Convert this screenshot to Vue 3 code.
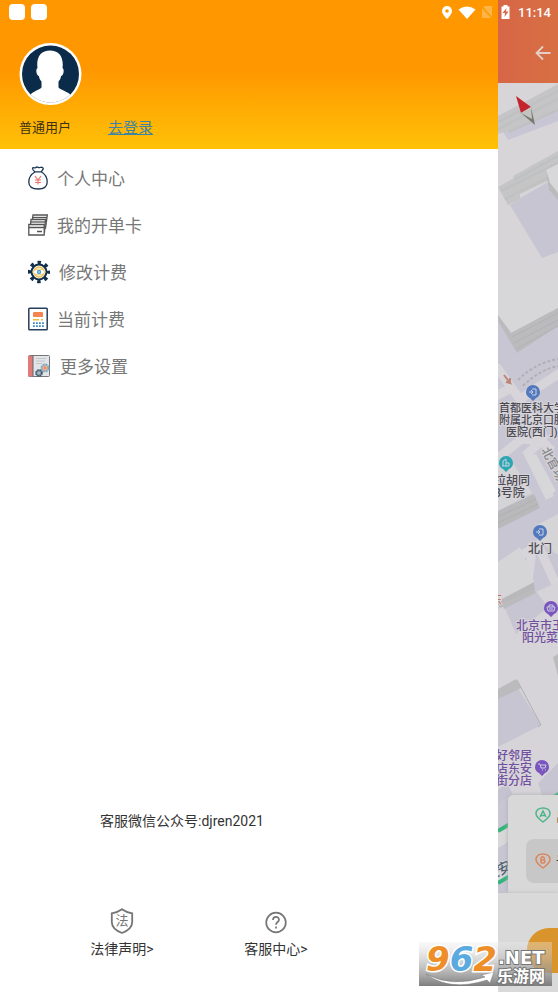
<template>
  <div class="screen">
    <!-- 系统状态栏 -->
    <div class="status-bar">
      <span class="notice"></span>
      <span class="notice"></span>
      <svg class="status-icons" viewBox="0 0 72 18" width="72" height="18">
        <path d="M7 3a5 5 0 0 0-5 5c0 3.500 5 8 5 8s5-4.500 5-8a5 5 0 0 0-5-5z" fill="#fff" />
        <circle cx="7" cy="8" r="1.800" fill="#ff9800" />
        <path d="M18.500 6.500q8.500-6 17 0L27 16z" fill="#fff" />
        <path d="M45 3h7v12H42V6z" fill="#fff" opacity=".28" />
        <path d="M41 3l12 13" stroke="#ff9800" stroke-width="1.500" />
        <path d="M63.500 2h4v1.500h2V16h-8V3.500h2z" fill="#fff" />
        <path d="M66.500 5l-4 5h2.500l-.5 4 4-5.500H66z" fill="#d86846" />
      </svg>
      <span class="clock">11:14</span>
    </div>

    <!-- 侧边抽屉 -->
    <aside class="drawer">
      <header class="user">
        <svg class="avatar" viewBox="0 0 63 63">
          <circle cx="31.500" cy="31" r="31" fill="#fff" />
          <circle cx="31.500" cy="31" r="28.500" fill="#0b2b4b" />
          <path
            d="M11.500 51.500C14 48.500 20 47 22.500 44.500V38.500c-1.500-1.500-2.300-3.500-2.600-5.500-2.400-.5-3.600-6.500-1.400-8C17 14 22 7.500 31 7.500S45 14 43.500 25c2.200 1.500 1 7.500-1.400 8-.3 2-1.100 4-2.600 5.500v6c2.500 2.500 8.500 4 12 7a28.500 28.500 0 0 1-40 0z"
            fill="#fff"
          />
        </svg>
        <div class="user-row">
          <span class="user-name">普通用户</span>
          <a href="#" class="login">去登录</a>
        </div>
      </header>

      <nav class="menu">
        <a v-for="item in menus" :key="item.icon" href="#" class="menu-item">
          <!-- 钱袋 -->
          <svg v-if="item.icon === 'bag'" width="20" height="24" viewBox="0 0 20 24" fill="none">
            <path
              d="M7 6C5 4 4 3 4.500 2c1-1 2 .5 3-.3C8.500.7 9.500.8 10.500 1.500c1 .7 2-.6 3.500-.2 2 .7 1.500 1.700-.8 4.500C17 8 19.200 12 19.200 16c0 5-3.500 7-9.200 7S.8 21 .8 16C.8 12 3.500 8 7 6zM6.500 5.800h7"
              stroke="#1d3653"
              stroke-width="1.300"
            />
            <path d="M7 10l3 4 3-4M7 14h6M7 16.500h6M10 14v4.500" stroke="#f1776c" stroke-width="1.200" />
          </svg>
          <!-- 卡片 -->
          <svg v-else-if="item.icon === 'cards'" width="20" height="24" viewBox="0 0 20 24" fill="#fff" stroke="#555" stroke-width="1.300">
            <path d="M5 2h14.300L17.500 15H3.500z" />
            <path d="M4.500 4.500h14.500" />
            <path d="M3 6.500h14.500L16.500 19H2z" />
            <path d="M3 9h14" />
            <path d="M.8 11.500h15.400V22H.8z" />
            <path d="M1 14.500h15M9 18.500h5" />
          </svg>
          <!-- 齿轮 -->
          <svg v-else-if="item.icon === 'gear'" width="22" height="24" viewBox="0 0 22 24">
            <circle cx="11" cy="12" r="9.400" fill="none" stroke="#12304c" stroke-width="3.600" stroke-dasharray="3.400 3.980" stroke-dashoffset="1.700" />
            <circle cx="11" cy="12" r="7.400" fill="#fff" stroke="#12304c" stroke-width="2" />
            <circle cx="11" cy="12" r="5" fill="#fff5d8" stroke="#eebf4c" stroke-width="1.400" />
            <path d="M4.500 12q6.500-6 13 0-6.500 6-13 0z" fill="#fff" stroke="#e6c56b" stroke-width=".8" />
            <circle cx="11" cy="12" r="2.200" fill="#4d9fc8" />
            <circle cx="11" cy="12" r=".7" fill="#fff" />
          </svg>
          <!-- 计算器 -->
          <svg v-else-if="item.icon === 'calc'" width="20" height="24" viewBox="0 0 20 24">
            <rect x=".8" y="1.300" width="18.400" height="21.400" rx=".8" fill="#fff" stroke="#263e59" stroke-width="1.500" />
            <rect x="5" y="5" width="10" height="5" rx="1" fill="#f5854e" />
            <path d="M5 12.700h6M13 12.700h2" stroke="#edbb3b" stroke-width="1.600" />
            <path d="M5 16.200h11M5 19.200h11" stroke="#3a8bc4" stroke-width="1.800" stroke-dasharray="1.800 1.200" />
          </svg>
          <!-- 手册 -->
          <svg v-else width="23" height="24" viewBox="0 0 23 24">
            <rect x=".5" y="1.500" width="21" height="21" rx="1" fill="#e2e5e7" stroke="#77777b" />
            <path d="M0 2h5v20.500H0z" fill="#e17b78" />
            <path d="M5 1.500v21" stroke="#666" />
            <path d="M8 4.500h10M8 7h9M8 9.500h6" stroke="#c2c7ca" />
            <circle cx="17" cy="14" r="3.500" fill="#f2b18e" stroke="#74adc9" stroke-width="2" stroke-dasharray="2 .75" />
            <circle cx="17" cy="14" r="1.400" fill="#ed8e69" />
            <circle cx="11" cy="19" r="2.800" fill="#a9bac5" stroke="#3d566b" stroke-width="2" stroke-dasharray="1.700 .5" />
          </svg>
          <span>{{ item.name }}</span>
        </a>
      </nav>

      <p class="contact">客服微信公众号:djren2021</p>
      <div class="links">
        <a href="#" class="link">
          <svg width="24" height="26" viewBox="0 0 24 26">
            <path
              d="M12 1.200c3 2.300 6 3.300 10.200 4.100V14c0 5-5 9-10.200 11C6.800 23 1.800 19 1.800 14V5.300C6 4.500 9 3.500 12 1.200z"
              fill="none"
              stroke="#757575"
              stroke-width="1.800"
            />
            <text x="12" y="17" class="shield-text">法</text>
          </svg>
          <span>法律声明&gt;</span>
        </a>
        <a href="#" class="link">
          <svg width="24" height="26" viewBox="0 0 24 26" fill="none" stroke="#757575" stroke-width="1.700">
            <circle cx="12" cy="14.500" r="9.800" />
            <path d="M9 12c0-4 6-4 6-.3 0 2.300-3 2.300-3 5" />
            <path d="M12 18.500v2" />
          </svg>
          <span>客服中心&gt;</span>
        </a>
      </div>
    </aside>

    <!-- 被遮罩的首页 -->
    <main class="home">
      <div class="app-bar">
        <button class="back" aria-label="返回">
          <svg width="16" height="16" viewBox="0 0 16 16" fill="none" stroke="#e4cfc9" stroke-width="1.800">
            <path d="M15.500 8H1.500M8 1.500L1.500 8 8 14.500" />
          </svg>
        </button>
      </div>
      <div class="map">
        <svg class="map-canvas" viewBox="498 83 60 810" preserveAspectRatio="xMinYMin slice">
          <path d="M498 83h60v810h-60z" fill="#d7d5d8" />
          <path d="M498 320l60-20v593h-60z" fill="#c9c6d3" />
          <!-- 楼体 -->
          <path d="M503 132l55-22v11l-50 19z" fill="#c8c6d4" />
          <path d="M498 116l60-32v27l-45 20-9 1-6 2z" fill="#c5c5c7" />
          <path d="M498 122l60-31M498 129l60-30M509 132l49-22" stroke="#bfc0c2" stroke-width="2" />
          <path d="M510 205l12-8 26-15 10 17v53l-16 6z" fill="#c7c5d2" />
          <path d="M498 187l16-9-1-2 45-25v25l-38 18v5l-12 6z" fill="#c5c5c6" />
          <path d="M514 180l44-24M501 191l57-28M505 199l48-24" stroke="#bfc0c2" stroke-width="2" />
          <path d="M546 170l12-6v27l-8-9z" fill="#d8d7d9" />
          <path d="M546 170l4 13 8 10v7l-9-10z" fill="#bbbbbd" />
          <path d="M498 280h60v28l-47 25-13-18z" fill="#d7d6d8" />
          <path d="M498 315l13 18 47-25v18l-41 27-19-32z" fill="#bbbbbd" />
          <path d="M512 337l46-24M514 343l44-23M516 349l42-23" stroke="#b2b2b5" stroke-width="1" />
          <!-- 道路 -->
          <path d="M496 366l25 35 24 39M496 396l15-8M520 399l40-26M498 458l24-19 20 2 10 10M545 438l-17 15 22 45M498 570l40-25 25 55M533 543l-8 60" stroke="#d7d5d9" stroke-width="9" fill="none" />
          <path d="M518 380q17-17 40-21M523 386q17-17 36-20" stroke="#b0afb4" stroke-width="2" stroke-dasharray="3 2" fill="none" />
          <path d="M504 375l6 8-4-1M510 383v-5" stroke="#be8579" stroke-width="2" fill="none" />
          <path d="M526 459l10-5 20 37-9 6z" fill="#d7d6d9" />
          <path d="M498 459l15 4 19 30-34 18z" fill="#d4d3d6" />
          <path d="M498 511l36-17 6 14-42 21z" fill="#b9b9bc" />
          <path d="M498 517l38-18M498 523l40-19" stroke="#b0b0b3" />
          <path d="M535 526l23-12v41l-20-15z" fill="#d5d4d7" />
          <path d="M498 562l22-15 15 37-37 23z" fill="#d5d4d7" />
          <path d="M498 601l36-19 1 9-33 18-4-4z" fill="#b8b8bb" />
          <path d="M498 609l60-27v235h-60z" fill="#d6d4d8" />
          <path d="M504 606l31-16 13 17-32 27z" fill="#c7c5d2" />
          <path d="M502 603l32-14 2 4-32 16z" fill="#bbbbbd" />
          <path d="M553 657l5-3v22z" fill="#bbbbbd" />
          <path d="M498 697l20-9 23 37-43 22z" fill="#c7c5d2" />
          <path d="M498 689l18-10 5 9-23 11z" fill="#bbbbbd" />
          <path d="M517 680l24 45-3 2" stroke="#b1b1b4" fill="none" />
          <path d="M498 790l9-7 6 12-15 9z" fill="#c6c3d0" />
          <path d="M538 783l20-20v32h-16z" fill="#c7c5d2" />
          <path d="M498 803l10-4v94h-10z" fill="#c9c6d4" />
          <path d="M498 831l10-6v17l-10 6zM498 872l10-5v9l-10 5z" fill="#d8d8da" />
          <path d="M498 831l12-7M498 883l12-7M550 799l9-5" stroke="#35b57c" stroke-width="4" />

          <!-- 指南针 -->
          <path d="M516 96l15 11-10 6z" fill="#c4242b" />
          <path d="M531 107l4 18-14-12z" fill="#c3c3bf" />
          <path d="M521 113l14 12-2-9-2-9 1 12z" fill="#777973" />

          <!-- 地点标记 -->
          <g v-for="pin in pins" :key="pin.y" :fill="pin.color">
            <path :d="`M${pin.x - 7} ${pin.y}a7 7 0 1 1 14 0q0 4-4 6l-3 3-3-3q-4-2-4-6z`" />
            <path v-if="pin.type === 'door'" :d="`M${pin.x - 1} ${pin.y - 3}h4v6h-4M${pin.x - 4} ${pin.y}h4m-2-2l2 2-2 2`" class="pin-line" />
            <path v-else-if="pin.type === 'home'" :d="`M${pin.x - 3} ${pin.y + 3}v-5l3-2v7M${pin.x} ${pin.y}h3v3h-7`" class="pin-line" />
            <path v-else-if="pin.type === 'cart'" :d="`M${pin.x - 4} ${pin.y - 3}h2l1 4h4l1-3h-5m1 5h1m2 0h1`" class="pin-line" />
            <path v-else :d="`M${pin.x - 4} ${pin.y - 1}h8l-1 4h-6zm2 0v-2h4v2m-3 1v2m2-2v2`" class="pin-line" />
          </g>
          <g class="map-text">
            <text
              v-for="label in labels"
              :key="label.text"
              :x="label.x"
              :y="label.y"
              :class="label.type"
            >{{ label.text }}</text>
            <text class="road" transform="translate(541 450) rotate(62)">北官场</text>
            <text class="street" transform="translate(488 882) rotate(-28)">长安</text>
            <text class="red" x="490" y="604">东</text>
          </g>
        </svg>

        <div class="route-card">
          <div class="route-row">
            <svg width="16" height="16" viewBox="0 0 16 16" fill="none" stroke="#50b58b" stroke-width="1.500">
              <path d="M8 15Q1 10 1 6.500C1 3 4 1 8 1s7 2 7 5.500Q15 10 8 15z" />
              <path d="M5 10l3-6 3 6M6 8.500h4" />
            </svg>
            <span>出发地</span>
          </div>
          <div class="route-row target">
            <svg width="16" height="16" viewBox="0 0 16 16" fill="none" stroke="#dc865b" stroke-width="1.500">
              <path d="M8 15Q1 10 1 6.500C1 3 4 1 8 1s7 2 7 5.500Q15 10 8 15z" />
              <path d="M6 4v6M6 4h2.500q2 1.500 0 3H6h3q2 1.500 0 3H6" />
            </svg>
            <span>请选择</span>
          </div>
        </div>
      </div>
      <div class="action-bar">
        <button class="order" aria-label="开始"></button>
      </div>
    </main>

    <!-- 右下角站点标识 -->
    <svg class="site-mark" viewBox="0 0 133 44">
      <defs>
        <linearGradient id="markBg" x1="0" y1="0" x2="0" y2="1">
          <stop offset="0" stop-color="#eee" stop-opacity=".35" />
          <stop offset=".5" stop-color="#aaa" stop-opacity=".6" />
          <stop offset="1" stop-color="#777" stop-opacity=".95" />
        </linearGradient>
      </defs>
      <path d="M0 0h133v44H0z" fill="url(#markBg)" />
      <path d="M7 32q25 14 59 3l-4-2 13-3-4 11-3-3Q31 50 7 32z" fill="#fff" stroke="#777" stroke-width=".5" />
      <text x="7" y="29" class="digits">
        <tspan fill="#ee8e28">9</tspan><tspan fill="#5aa9df">6</tspan><tspan fill="#ee8e28">2</tspan>
      </text>
      <text x="79" y="22" class="net">.NET</text>
      <text x="78" y="40" class="mark-name">乐游网</text>
    </svg>
  </div>
</template>

<script setup>
import { ref } from 'vue'

// 抽屉菜单
const menus = ref([
  { icon: 'bag', name: '个人中心' },
  { icon: 'cards', name: '我的开单卡' },
  { icon: 'gear', name: '修改计费' },
  { icon: 'calc', name: '当前计费' },
  { icon: 'book', name: '更多设置' }
])

// 地图标记
const pins = [
  { x: 533, y: 392, color: '#5278bd', type: 'door' },
  { x: 506, y: 463, color: '#2ca6b2', type: 'home' },
  { x: 540, y: 532, color: '#5278bd', type: 'door' },
  { x: 551, y: 608, color: '#7b55bd', type: 'basket' },
  { x: 542, y: 767, color: '#7b55bd', type: 'cart' }
]

// 地图文字
const labels = [
  { x: 499, y: 412, text: '首都医科大学', type: 'hospital' },
  { x: 499, y: 424, text: '附属北京口腔', type: 'hospital' },
  { x: 506, y: 436, text: '医院(西门)', type: 'hospital' },
  { x: 494, y: 485, text: '拉胡同' },
  { x: 494, y: 497, text: '8号院' },
  { x: 528, y: 553, text: '北门' },
  { x: 516, y: 630, text: '北京市王府井', type: 'shop' },
  { x: 522, y: 642, text: '阳光菜市场', type: 'shop' },
  { x: 496, y: 760, text: '好邻居', type: 'shop' },
  { x: 496, y: 773, text: '店东安', type: 'shop' },
  { x: 496, y: 785, text: '街分店', type: 'shop' }
]
</script>

<style>
body {
  margin: 0;
}
</style>

<style scoped>
.screen {
  position: relative;
  display: flex;
  min-height: 100vh;
  overflow: hidden;
  background: #fff;
  font-family: Roboto, 'Noto Sans CJK SC', sans-serif;
}

a {
  color: inherit;
  text-decoration: none;
}

/* 状态栏 */
.status-bar {
  position: absolute;
  top: 0;
  left: 0;
  right: 0;
  z-index: 2;
  display: flex;
  align-items: center;
  gap: 6px;
  height: 24px;
  padding: 0 7px 0 9px;
}
.notice {
  width: 16px;
  height: 16px;
  border-radius: 4px;
  background: #fff;
}
.status-icons {
  margin-left: auto;
}
.clock {
  color: #fff;
  font-size: 13px;
  font-weight: 500;
}

/* 抽屉 */
.drawer {
  flex: 1;
  display: flex;
  flex-direction: column;
}
.user {
  padding: 43px 19px 11px;
  background: linear-gradient(#ff9800 0%, #ff9800 48%, #ffc107 100%);
}
.avatar {
  display: block;
  width: 63px;
  height: 63px;
}
.user-row {
  display: flex;
  gap: 37px;
  margin-top: 12px;
  line-height: 20px;
}
.user-name {
  color: #3c3214;
  font-size: 13px;
}
.login {
  color: #3d83a6;
  font-size: 15px;
  text-decoration: underline;
}

/* 菜单 */
.menu {
  padding-top: 5px;
}
.menu-item {
  display: flex;
  align-items: center;
  gap: 9px;
  height: 47px;
  padding-left: 28px;
  color: #777;
  font-size: 17px;
}

/* 底部信息 */
.contact {
  margin: auto 0 77px 100px;
  color: #333;
  font-size: 14px;
  line-height: 20px;
}
.links {
  display: flex;
  padding: 0 0 33px 45px;
}
.link {
  display: flex;
  flex-direction: column;
  align-items: center;
  gap: 5px;
  width: 154px;
  color: #333;
  font-size: 14px;
  line-height: 20px;
}
.shield-text {
  fill: #757575;
  font-size: 13px;
  text-anchor: middle;
}

/* 首页 */
.home {
  display: flex;
  flex-direction: column;
  width: 60px;
  overflow: hidden;
}
.app-bar {
  display: flex;
  align-items: flex-end;
  height: 83px;
  background: linear-gradient(90deg, #d76647, #d86f43);
}
.back {
  display: flex;
  margin: 0 0 22px 37px;
  padding: 0;
  border: none;
  background: none;
  cursor: pointer;
}
.map {
  position: relative;
  flex: 1;
  overflow: hidden;
  background: #d7d5d8;
}
.map-canvas {
  position: absolute;
  top: 0;
  left: 0;
  width: 100%;
  height: 100%;
}
.pin-line {
  fill: none;
  stroke: #cbd3e4;
  stroke-width: 1;
}
.map-text {
  fill: #4c4b54;
  stroke: #d7d5d9;
  stroke-width: 2px;
  paint-order: stroke;
  font-size: 12px;
  font-weight: 500;
}
.map-text .hospital {
  font-size: 11px;
}
.map-text .shop {
  fill: #71509f;
}
.map-text .road {
  fill: #89898e;
}
.map-text .street {
  fill: #4b6070;
  font-size: 14px;
}
.map-text .red {
  fill: #cc7155;
}

/* 路线卡片 */
.route-card {
  position: absolute;
  left: 10px;
  right: 0;
  bottom: 0;
  display: flex;
  flex-direction: column;
  height: 98px;
  overflow: hidden;
  border-radius: 5px 0 0 0;
  background: #d8d8d8;
  box-shadow: 0 0 4px #aaa;
}
.route-row {
  display: flex;
  align-items: center;
  gap: 5px;
  height: 40px;
  margin-left: 18px;
  padding-left: 9px;
  color: #333;
  font-size: 15px;
  white-space: nowrap;
}
.route-row svg {
  flex-shrink: 0;
}
.target {
  height: 44px;
  margin-top: 4px;
  border-radius: 8px 0 0 8px;
  background: #c7c7c7;
}

/* 下单区 */
.action-bar {
  position: relative;
  height: 99px;
  overflow: hidden;
  background: #d9d9d9;
  box-shadow: 0 0 4px #bbb;
}
.order {
  display: block;
  width: 100%;
  height: 45px;
  margin: 35px 0 0 29px;
  border: none;
  border-radius: 22px 0 0 22px;
  background: #d9942b;
  cursor: pointer;
}

/* 站点标识 */
.site-mark {
  position: absolute;
  right: 6px;
  bottom: 6px;
  z-index: 3;
  width: 133px;
  height: 44px;
}
.digits {
  stroke: #fff;
  stroke-width: 3px;
  paint-order: stroke;
  font-family: 'DejaVu Sans', sans-serif;
  font-size: 34px;
  font-style: italic;
  font-weight: bold;
}
.net {
  fill: #fff;
  stroke: #777;
  stroke-width: 2px;
  paint-order: stroke;
  font-family: 'DejaVu Sans', sans-serif;
  font-size: 18px;
  font-weight: bold;
}
.mark-name {
  fill: #fff;
  stroke: #777;
  stroke-width: 2px;
  paint-order: stroke;
  font-size: 16px;
  font-weight: bold;
}
</style>
